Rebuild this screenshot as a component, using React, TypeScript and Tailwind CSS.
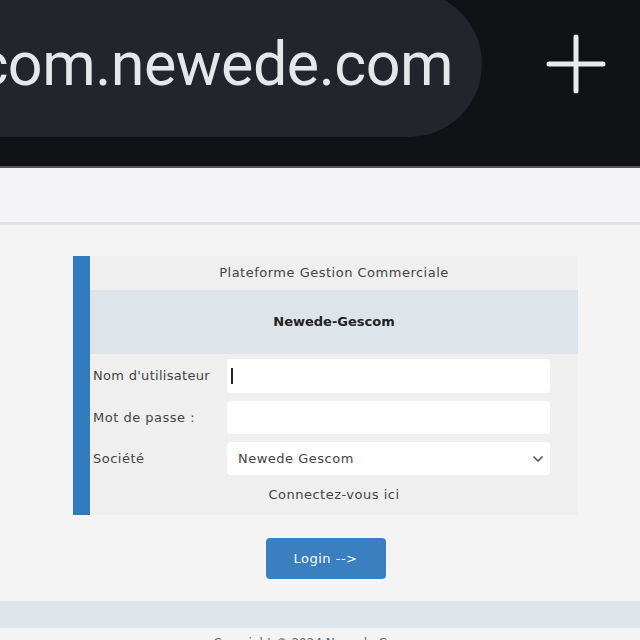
import { ChevronDown } from "lucide-react";

export default function App() {
  return (
    <div className="w-[640px] h-[640px] overflow-hidden bg-[#f4f4f4] font-['DejaVu_Sans',sans-serif]">
      {/* browser chrome */}
      <div className="h-[168px] bg-[#111216] flex items-start border-b-2 border-[#55565a]">
        <div className="-ml-[60px] -mt-[9px] w-[542px] h-[146px] rounded-r-full bg-[#22252b] flex items-center justify-end pr-[29px] overflow-hidden">
          <span className="whitespace-nowrap font-['Roboto',sans-serif] text-[61px] leading-none text-[#e6e7ea] tracking-[-0.5px]">
            gescom.newede.com
          </span>
        </div>
        <div className="ml-[64px] mt-[34px]">
          <svg width="60" height="60" viewBox="0 0 60 60">
            <path d="M30 3v54M3 30h54" stroke="#e8eaed" strokeWidth="5" strokeLinecap="round" />
          </svg>
        </div>
      </div>

      {/* page header strip */}
      <div className="h-[57px] bg-[#f4f3f5] border-b-[3px] border-[#dfe3e6]" />

      <div className="pt-[31px] flex flex-col items-center">
        {/* login card */}
        <div className="ml-[11px] w-[505px] flex bg-[#efefef] border-l-[17px] border-[#2f7bbd] text-[13px] tracking-[0.5px] text-[#444]">
          <div className="flex-1">
            <div className="h-[34px] flex items-center justify-center">Plateforme Gestion Commerciale</div>
            <div className="h-[64px] flex items-center justify-center bg-[#dde5ea] font-bold tracking-normal text-[#222]">
              Newede-Gescom
            </div>
            <div className="pt-[5px] pr-[28px] pl-[3px] flex flex-col gap-[8px]">
              <div className="flex items-center">
                <span className="w-[134px] whitespace-nowrap tracking-[0.3px]">Nom d'utilisateur</span>
                <div className="flex-1 h-[34px] bg-white rounded-[4px] flex items-center pl-[4px]">
                  <span className="w-[2px] h-[16px] bg-[#222]" />
                </div>
              </div>
              <div className="flex items-center">
                <span className="w-[134px] whitespace-nowrap">Mot de passe :</span>
                <div className="flex-1 h-[33px] bg-white rounded-[4px]" />
              </div>
              <div className="flex items-center">
                <span className="w-[134px] whitespace-nowrap">Société</span>
                <div className="flex-1 h-[33px] bg-white rounded-[4px] flex items-center justify-between pl-[11px] pr-[4px]">
                  <span>Newede Gescom</span>
                  <ChevronDown size={16} strokeWidth={2.5} className="text-[#555]" />
                </div>
              </div>
            </div>
            <div className="h-[40px] flex items-center justify-center text-[#444]">Connectez-vous ici</div>
          </div>
        </div>

        <button className="ml-[11px] mt-[23px] w-[120px] h-[41px] rounded-[4px] bg-[#3a80c0] text-white text-[13px] tracking-[0.5px]">
          Login --&gt;
        </button>
      </div>

      <div className="mt-[22px] h-[27px] bg-[#dfe6eb]" />
      <div className="pt-[6px] text-center text-[12px] text-[#666]">Copyright © 2024 Newede Gescom</div>
    </div>
  );
}
